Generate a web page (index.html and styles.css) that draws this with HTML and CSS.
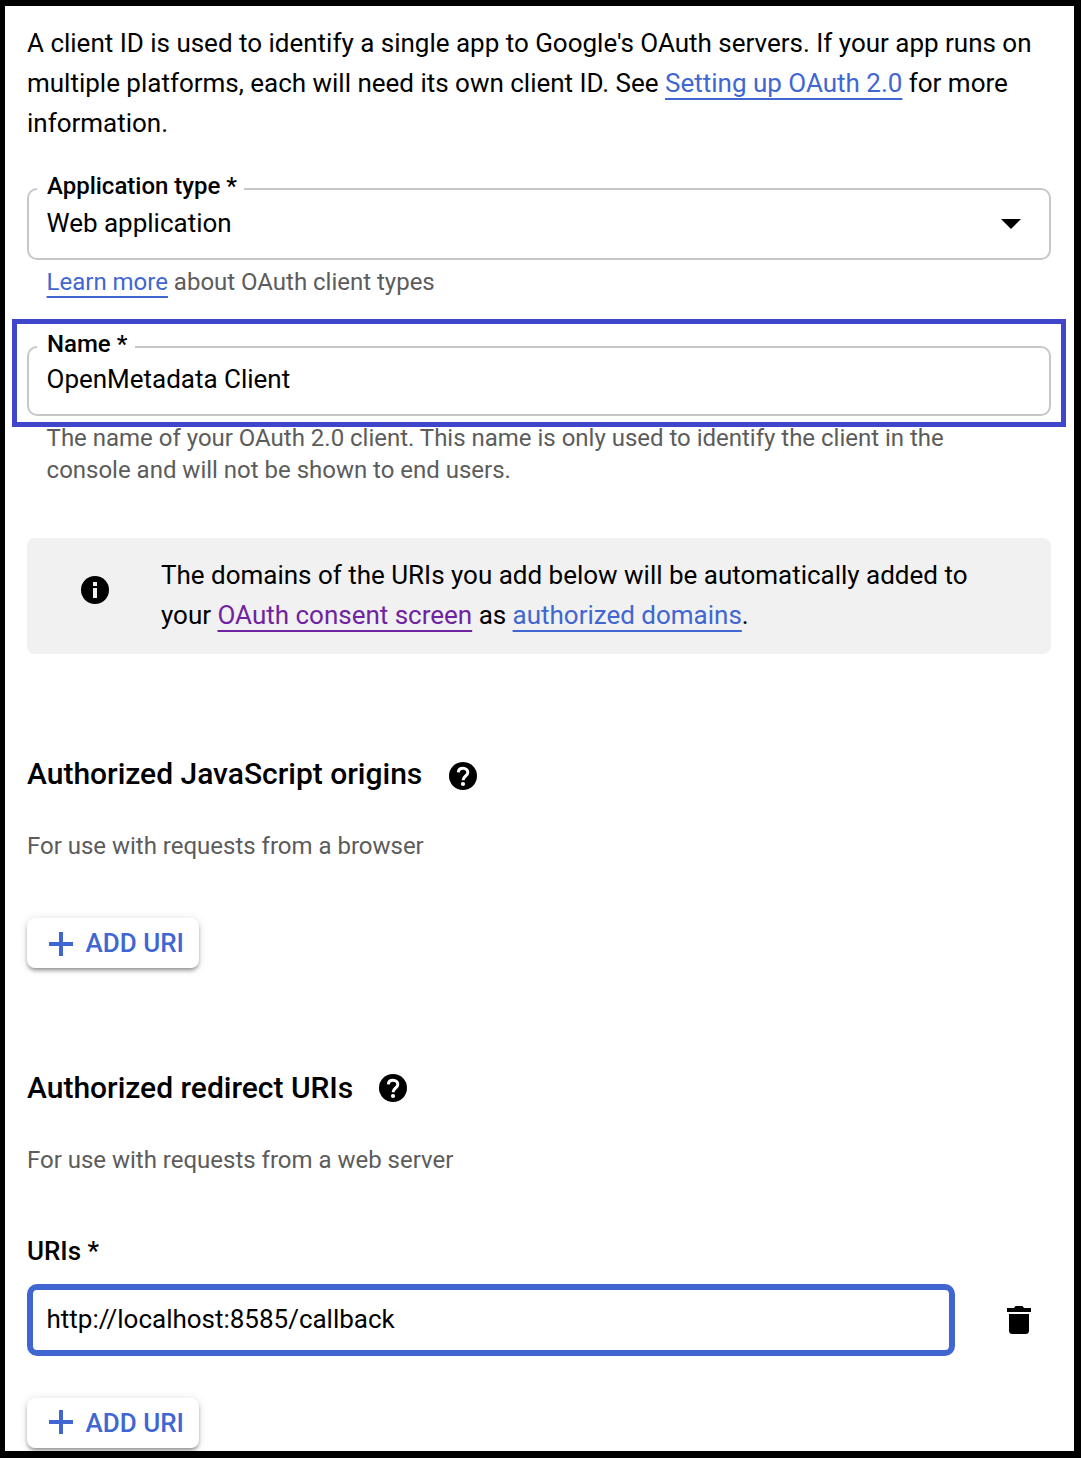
FILE: index.html
```html
<!DOCTYPE html>
<html lang="en">
<head>
<meta charset="utf-8">
<title>Create OAuth client ID</title>
<link rel="stylesheet" href="styles.css">
</head>
<body>
<main class="frame">
  <p class="intro">A client ID is used to identify a single app to Google's OAuth servers. If your app runs on<br>multiple platforms, each will need its own client ID. See <a class="link" href="#">Setting up OAuth 2.0</a> for more<br>information.</p>

  <fieldset class="field field-select">
    <legend class="field-label">Application type *</legend>
    <span class="field-value">Web application</span>
    <svg class="caret" width="20" height="10" viewBox="0 0 20 10"><path d="M0 0h20L10 10z"/></svg>
  </fieldset>
  <p class="hint"><a class="link" href="#">Learn more</a> about OAuth client types</p>

  <div class="highlighted">
    <fieldset class="field field-name">
      <legend class="field-label">Name *</legend>
      <span class="field-value">OpenMetadata Client</span>
    </fieldset>
    <span class="highlight"></span>
  </div>
  <p class="hint">The name of your OAuth 2.0 client. This name is only used to identify the client in the<br>console and will not be shown to end users.</p>

  <aside class="notice">
    <svg class="notice-icon" width="28" height="28" viewBox="0 0 28 28"><circle cx="14" cy="14" r="14"/><path fill="#f1f1f1" d="M12 6h4v4h-4zM12 12h4v10h-4z"/></svg>
    <p class="notice-text">The domains of the URIs you add below will be automatically added to<br>your <a class="link visited" href="#">OAuth consent screen</a> as <a class="link" href="#">authorized domains</a>.</p>
  </aside>

  <section class="origins">
    <div class="heading-row">
      <h2 class="heading">Authorized JavaScript origins</h2>
      <svg class="help" width="28" height="28" viewBox="0 0 28 28"><circle cx="14" cy="14" r="14"/><path class="help-hook" d="M9.300 10.300C9.500 7.900 11.500 6.300 14 6.300c2.700 0 4.800 1.800 4.800 4.200 0 3.600-4.700 3.500-4.700 7.800"/><circle class="help-dot" cx="14" cy="22" r="2.100"/></svg>
    </div>
    <p class="sub">For use with requests from a browser</p>
    <button class="add" type="button"><svg class="plus" width="24" height="24" viewBox="0 0 24 24"><path d="M10 0h4v10h10v4H14v10h-4V14H0v-4h10z"/></svg>ADD URI</button>
  </section>

  <section class="redirects">
    <div class="heading-row">
      <h2 class="heading">Authorized redirect URIs</h2>
      <svg class="help" width="28" height="28" viewBox="0 0 28 28"><circle cx="14" cy="14" r="14"/><path class="help-hook" d="M9.300 10.300C9.500 7.900 11.500 6.300 14 6.300c2.700 0 4.800 1.800 4.800 4.200 0 3.600-4.700 3.500-4.700 7.800"/><circle class="help-dot" cx="14" cy="22" r="2.100"/></svg>
    </div>
    <p class="sub">For use with requests from a web server</p>
    <p class="uris-label">URIs *</p>
    <div class="uri-row">
      <div class="uri-input">http://localhost:8585/callback</div>
      <svg class="trash" width="24" height="28" viewBox="0 0 24 28"><path d="M0 2h7l1.500-2h7L17 2h7v4H0zM2 8h20v16.500a3.500 3.500 0 0 1-3.500 3.500h-13A3.500 3.500 0 0 1 2 24.500z"/></svg>
    </div>
    <button class="add" type="button"><svg class="plus" width="24" height="24" viewBox="0 0 24 24"><path d="M10 0h4v10h10v4H14v10h-4V14H0v-4h10z"/></svg>ADD URI</button>
  </section>
</main>
</body>
</html>
```
FILE: styles.css
```css
* {
  box-sizing: border-box;
}

body {
  margin: 0;
  font-family: Roboto, "Liberation Sans", sans-serif;
  font-size: 26px;
  letter-spacing: -0.01px;
  color: #000;
  background: #fff;
}

p,
h2 {
  margin: 0;
  white-space: nowrap;
}

svg {
  display: block;
  flex: none;
}

.frame {
  height: 1458px;
  padding: 17px 23px 0 22px;
  border: solid #000;
  border-width: 6px 7px 7px 5px;
  overflow: hidden;
}

.intro {
  line-height: 40px;
}

.link {
  color: #4067d1;
  text-decoration: underline;
  text-decoration-thickness: 2px;
  text-underline-offset: 6px;
  text-decoration-skip-ink: none;
}

.visited {
  color: #6f23a1;
}

.field {
  display: flex;
  align-items: flex-start;
  justify-content: space-between;
  min-width: 0;
  margin: 0;
  padding: 0 28px 0 8px;
  border: 2px solid #c8c8c8;
  border-radius: 10px;
}

.field-select {
  height: 86px;
  margin-top: 31px;
}

.field-name {
  height: 84px;
}

.field-label {
  padding: 0 7.5px 6px 10px;
  font-size: 24px;
  font-weight: 500;
  line-height: 24px;
}

.field-value {
  padding-left: 9.5px;
  line-height: 38px;
}

.field-name .field-value {
  line-height: 34px;
}

.caret {
  margin-top: 15px;
}

.hint {
  margin-top: 6px;
  padding-left: 19.6px;
  font-size: 24px;
  line-height: 32px;
  color: #5c5c5c;
}

.highlighted {
  position: relative;
  margin-top: 34px;
}

/* Callout box drawn over the name field */
.highlight {
  position: absolute;
  inset: -13px -15px -11px;
  border: 5px solid #3f46cc;
}

.notice {
  display: flex;
  gap: 52px;
  height: 116px;
  margin-top: 52px;
  padding: 17px 54px 19px;
  border-radius: 8px;
  background: #f1f1f1;
}

.notice-icon {
  margin-top: 21px;
}

.notice-text {
  line-height: 40px;
}

.origins {
  margin-top: 100px;
}

.heading-row {
  display: flex;
  align-items: center;
  gap: 26.6px;
  height: 40px;
}

.redirects .heading-row {
  gap: 25.5px;
}

.heading {
  font-size: 30px;
  font-weight: 500;
  line-height: 40px;
}

.origins .help {
  margin-top: 4px;
}

.help-hook {
  fill: none;
  stroke: #fff;
  stroke-width: 3;
}

.help-dot {
  fill: #fff;
}

.sub {
  margin-top: 36px;
  font-size: 24px;
  line-height: 32px;
  color: #5c5c5c;
}

.add {
  display: flex;
  align-items: center;
  gap: 12.5px;
  width: 172px;
  height: 50px;
  padding: 0 0 0 22px;
  border: 0;
  border-radius: 8px;
  background: #fff;
  box-shadow: 0 3px 4px -1px rgba(0, 0, 0, 0.42), 0 1px 10px rgba(0, 0, 0, 0.12);
  font: inherit;
  font-weight: 500;
  color: #4067d1;
}

.plus {
  fill: currentColor;
}

.origins .add {
  margin-top: 56px;
}

.origins .plus {
  margin-top: 2px;
}

.redirects .plus {
  margin-bottom: 2px;
}

.redirects {
  margin-top: 100px;
}

.uris-label {
  margin-top: 55px;
  font-weight: 500;
  line-height: 40px;
}

.uri-row {
  display: flex;
  align-items: center;
  gap: 52px;
  margin-top: 13px;
}

.uri-input {
  width: 928px;
  height: 72px;
  padding-left: 13.5px;
  border: 6px solid #4067d1;
  border-radius: 10px;
  line-height: 58px;
}

.redirects .add {
  margin-top: 42px;
}
```
